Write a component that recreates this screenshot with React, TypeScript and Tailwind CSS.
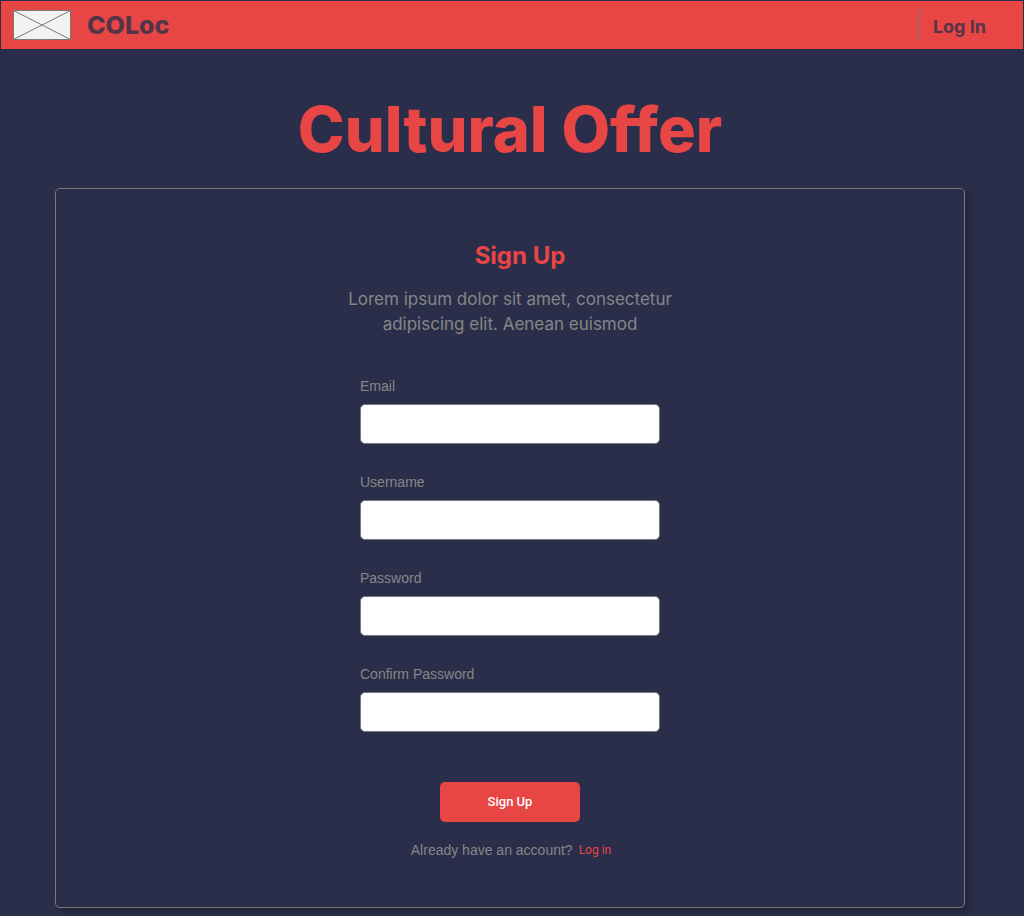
const fields = [
  { id: 'email', label: 'Email', type: 'email', autoComplete: 'email' },
  { id: 'username', label: 'Username', type: 'text', autoComplete: 'username' },
  { id: 'password', label: 'Password', type: 'password', autoComplete: 'new-password' },
  { id: 'confirm-password', label: 'Confirm Password', type: 'password', autoComplete: 'new-password' },
];

function Logo() {
  return (
    <svg width="58" height="30" viewBox="0 0 58 30" aria-hidden="true">
      <rect x="0.5" y="0.5" width="57" height="29" fill="#f2f2f2" stroke="#797979" />
      <path d="M0.5 0.5 57.5 29.5M0.5 29.5 57.5 0.5" stroke="#797979" fill="none" />
    </svg>
  );
}

function Header() {
  return (
    <header className="p-px">
      <div className="flex h-12 items-center bg-[#e84545] pr-[37px] pl-3 font-['Inter',sans-serif] text-[#53354a]">
        <Logo />
        <span className="ml-4 pt-0.5 text-[25px] font-extrabold">COLoc</span>
        <div className="ml-auto h-8 w-px bg-[#797979]" />
        <a href="#login" className="pt-1 pl-3.5 text-lg font-bold">
          Log In
        </a>
      </div>
    </header>
  );
}

function SignUpForm() {
  return (
    <form className="mx-auto mt-[39px] flex w-full max-w-[300px] flex-col items-center" onSubmit={(e) => e.preventDefault()}>
      <div className="flex w-full flex-col gap-7">
        {fields.map((field) => (
          <div key={field.id} className="flex flex-col gap-2">
            <label htmlFor={field.id} className="text-sm">
              {field.label}
            </label>
            <input
              id={field.id}
              type={field.type}
              autoComplete={field.autoComplete}
              className="h-10 w-full rounded-[5px] border border-[#797979] bg-white px-3 text-sm text-[#333333]"
            />
          </div>
        ))}
      </div>
      <button
        type="submit"
        className="mt-[50px] h-10 w-[140px] rounded-[5px] bg-[#e84545] font-['Roboto',sans-serif] text-[13px] font-medium text-white"
      >
        Sign Up
      </button>
      <p className="mt-[18px] flex items-center gap-1.5 pl-0.5 text-sm whitespace-nowrap">
        Already have an account?
        <a href="#login" className="font-['Roboto',sans-serif] text-xs text-[#e84545]">
          Log in
        </a>
      </p>
    </form>
  );
}

export default function App() {
  return (
    <div className="min-h-screen bg-[#2b2e4a] pb-2 font-['Liberation_Sans',Arial,sans-serif] text-[#868686]">
      <Header />
      <main className="pr-[59px] pl-[55px]">
        <h1 className="mt-10 text-center font-['Inter',sans-serif] text-[63px] leading-[78px] font-extrabold text-[#e84545]">
          Cultural Offer
        </h1>
        <section className="mt-5 rounded-[5px] border border-[#797979] px-6 pt-[51px] pb-[47px] shadow-[5px_5px_5px_rgba(0,0,0,0.2)]">
          <h2 className="pl-5 text-center font-['Inter',sans-serif] text-2xl font-bold text-[#e84545]">Sign Up</h2>
          <p className="mx-auto mt-[15px] max-w-[350px] text-center font-['Inter',sans-serif] text-[17px] leading-[25px]">
            Lorem ipsum dolor sit amet, consectetur adipiscing elit. Aenean euismod
          </p>
          <SignUpForm />
        </section>
      </main>
    </div>
  );
}
